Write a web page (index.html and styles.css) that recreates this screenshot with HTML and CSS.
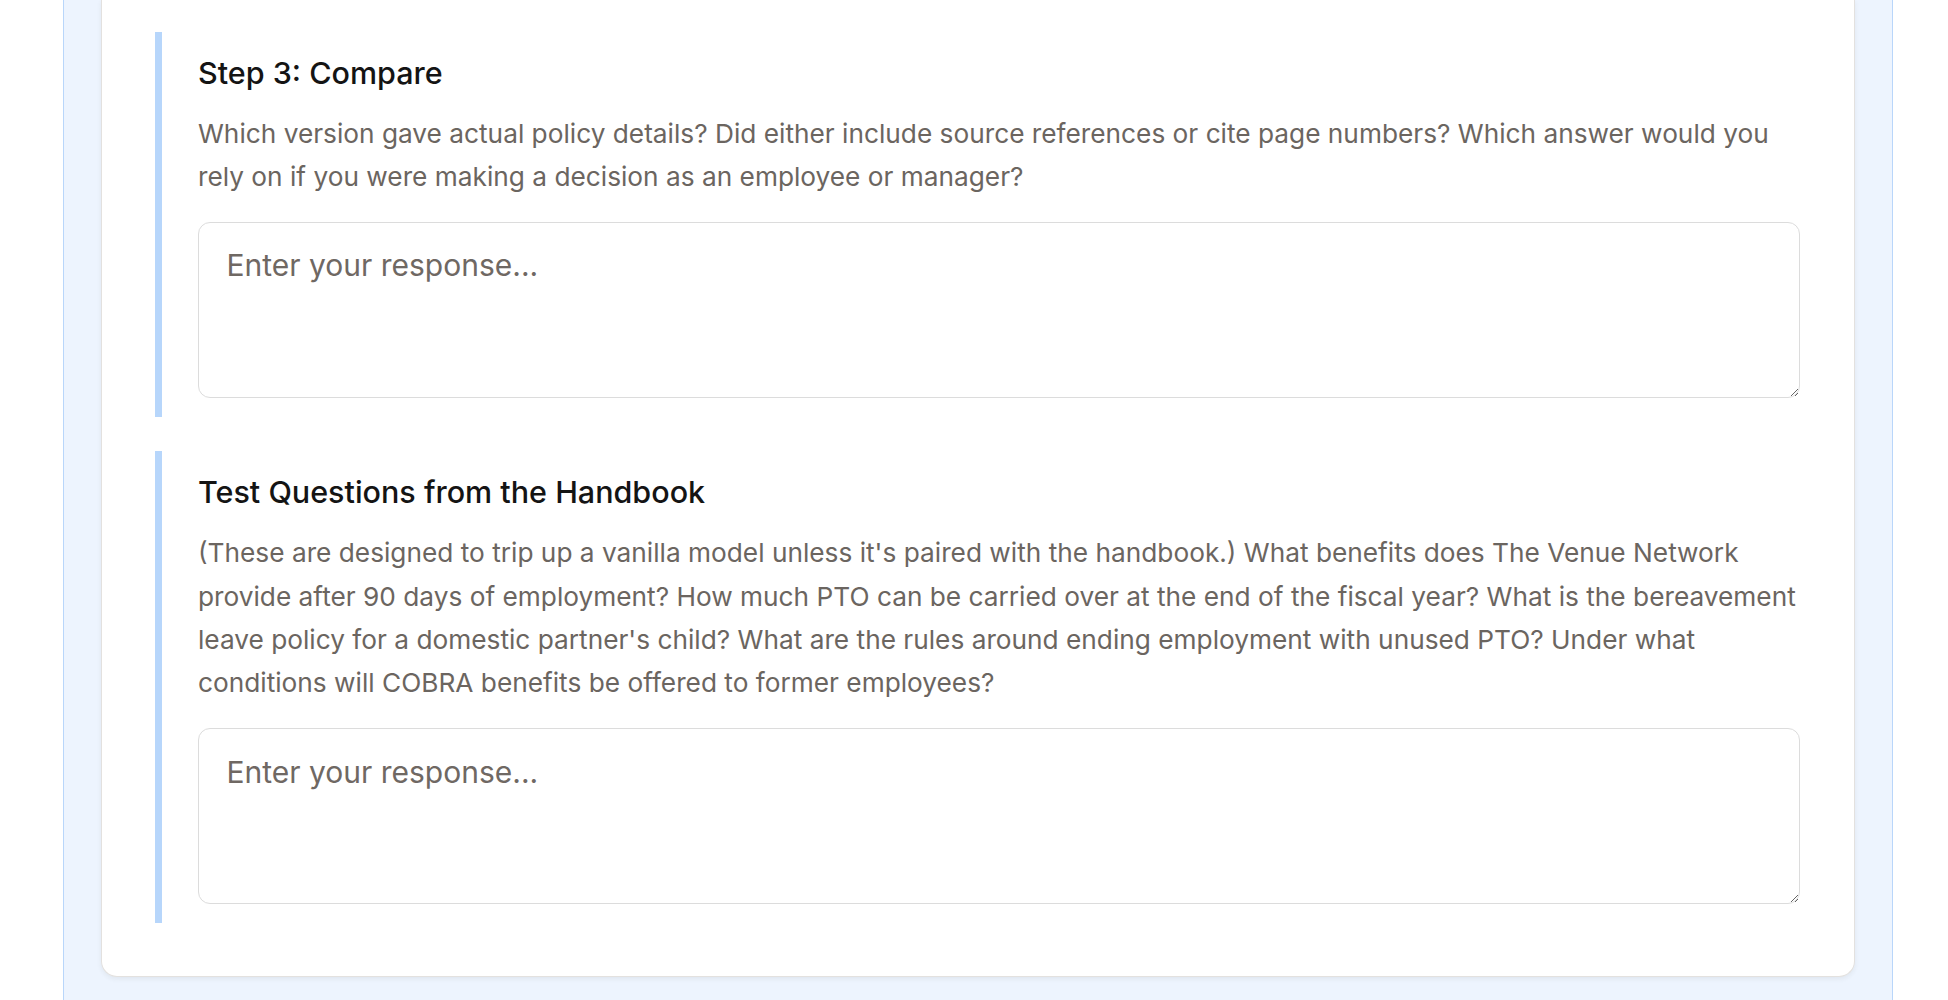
FILE: index.html
```html
<!DOCTYPE html>
<html lang="en">
<head>
<meta charset="utf-8">
<title>Exercise</title>
<link rel="stylesheet" href="styles.css">
</head>
<body>
<div class="frame">
  <div class="card">
    <section class="step">
      <h3 class="step-title">Step 3: Compare</h3>
      <p class="step-text">Which version gave actual policy details? Did either include source references or cite page numbers? Which answer would you rely on if you were making a decision as an employee or manager?</p>
      <textarea class="response" placeholder="Enter your response..."></textarea>
    </section>
    <section class="step">
      <h3 class="step-title">Test Questions from the Handbook</h3>
      <p class="step-text">(These are designed to trip up a vanilla model unless it's paired with the handbook.) What benefits does The Venue Network provide after 90 days of employment? How much PTO can be carried over at the end of the fiscal year? What is the bereavement leave policy for a domestic partner's child? What are the rules around ending employment with unused PTO? Under what conditions will COBRA benefits be offered to former employees?</p>
      <textarea class="response" placeholder="Enter your response..."></textarea>
    </section>
  </div>
</div>
</body>
</html>
```
FILE: styles.css
```css
html, body {
  margin: 0;
  padding: 0;
  background: #ffffff;
  font-family: "Inter", "Noto Sans", sans-serif;
}

.frame {
  margin-left: 63px;
  width: 1830px;
  box-sizing: border-box;
  height: 1000px;
  background: #edf4fe;
  border-left: 1px solid #b9d6fa;
  border-right: 1px solid #b9d6fa;
  padding: 0 37px;
  overflow: hidden;
}

.card {
  background: #ffffff;
  border: 1px solid #e3e1df;
  border-top: 0;
  border-radius: 0 0 16px 16px;
  box-shadow: 0 2px 5px rgba(60, 50, 40, 0.07);
  padding: 32px 54px 53px 53px;
}

.step {
  border-left: 7.5px solid #b7d6fb;
  padding: 23px 0 18.75px 36px;
}

.step + .step {
  margin-top: 34.5px;
}

.step-title {
  margin: 0;
  font-size: 30.5px;
  line-height: 36px;
  font-weight: 500;
  color: #141414;
}

.step-text {
  margin: 20.8px 0 0;
  font-size: 26.25px;
  line-height: 43.4px;
  color: #6b6560;
}

.response {
  display: block;
  box-sizing: border-box;
  width: 100%;
  height: 176px;
  margin-top: 23.5px;
  padding: 21.3px 25px 21.3px 27.5px;
  border: 1px solid #dcdcdc;
  border-radius: 12px;
  font-family: "Inter", "Noto Sans", sans-serif;
  font-size: 30px;
  line-height: 42px;
  color: #333;
  background: #fff;
  outline: none;
}

.response::placeholder {
  color: #6f6863;
  opacity: 1;
}
```
